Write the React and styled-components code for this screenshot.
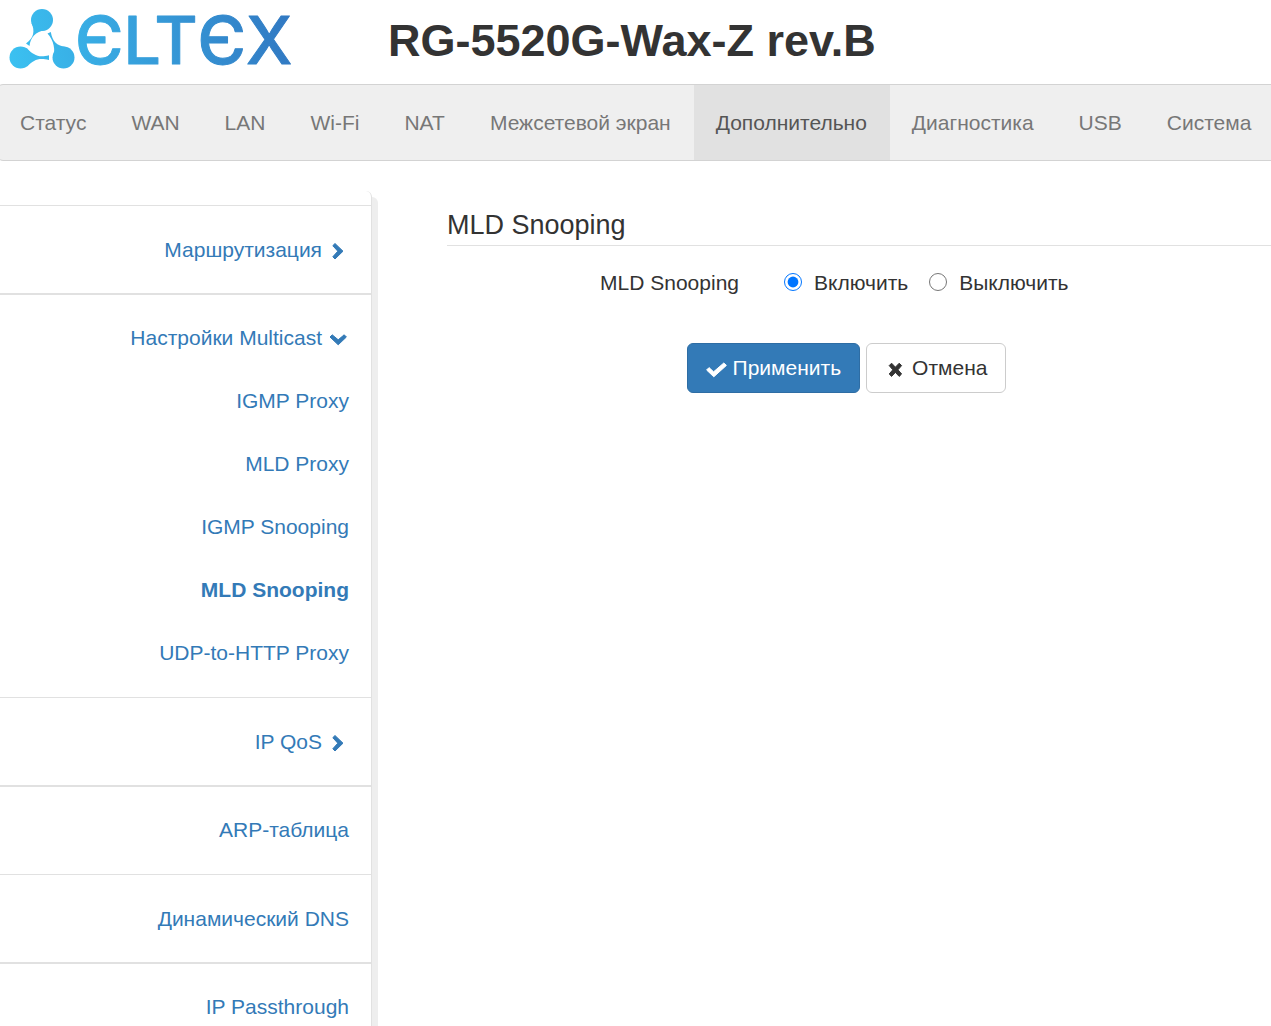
import React,{useState} from 'react';
import styled,{createGlobalStyle} from 'styled-components';

const secciones = ['Статус','WAN','LAN','Wi-Fi','NAT','Межсетевой экран','Дополнительно','Диагностика','USB','Система'];

const menu = [
    {titulo:'Маршрутизация',flecha:'derecha'},
    {titulo:'Настройки Multicast',flecha:'abajo',hijos:['IGMP Proxy','MLD Proxy','IGMP Snooping','MLD Snooping','UDP-to-HTTP Proxy']},
    {titulo:'IP QoS',flecha:'derecha'},
    {titulo:'ARP-таблица'},
    {titulo:'Динамический DNS'},
    {titulo:'IP Passthrough'}
];

const trazos = {
    derecha: 'M7 2.5 L15 10.2 L7 18 L4.8 15.8 L9.8 10.2 L4.8 4.7 Z',
    abajo: 'M4.2 5.8 L10.2 10.8 L16.2 5.8 L18.4 8 L10.2 15.8 L2 8 Z',
    aplicar: 'M0.6 10 L3 7.6 L7.6 11.8 L17.8 3 L20.4 5.4 L7.8 16.8 Z',
    cancelar: 'M4.2 5.6 L6.6 3.2 L10.4 7.2 L14.2 3.2 L16.6 5.6 L13 9.8 L16.6 14 L14.2 16.4 L10.4 12.4 L6.6 16.4 L4.2 14 L7.8 9.8 Z'
};

const Icono = ({nombre}) => (
    <Svg viewBox="0 0 21 21" aria-hidden="true">
        <path d={trazos[nombre]} />
    </Svg>
);

const Logo = () => (
    <LogoSvg viewBox="0 0 300 84" aria-label="ELTEX">
        <defs>
            <linearGradient id="degradado" gradientUnits="userSpaceOnUse" x1="9" y1="60" x2="292" y2="20">
                <stop offset="0" stopColor="#3bc1f1" />
                <stop offset="1" stopColor="#3178c2" />
            </linearGradient>
        </defs>
        <g fill="url(#degradado)">
            <circle cx="42" cy="20" r="11" />
            <path d="M31.5 23 C35 31 34 38 26 43.5 L29.5 46 C30.5 38 35 31.5 46 30 Z" />
            <circle cx="20.5" cy="57.5" r="11" />
            <path d="M26 48 C34 55 38 58 49 55.3 L49 60 C38 57.5 34 60 27 66.5 Z" />
            <circle cx="63.5" cy="57.5" r="11" />
            <path d="M47.5 33.5 L50.8 32 C52.5 41 56 46 67 47.2 L53.3 60 C55.5 49 54 41 47.5 33.5 Z" />
            <LogoTexto x="75" y="64">ЄLTЄX</LogoTexto>
        </g>
    </LogoSvg>
);

const App = () => {
    const [snooping,cambiarSnooping]=useState('on');

    return (
        <>
            <EstiloGlobal />
            <Cabecera>
                <Logo />
                <Modelo>RG-5520G-Wax-Z rev.B</Modelo>
            </Cabecera>
            <Navegacion>
                {secciones.map(seccion =>
                    <EnlaceNav key={seccion} href="#" $activo={seccion==='Дополнительно'}>{seccion}</EnlaceNav>
                )}
            </Navegacion>
            <Cuerpo>
                <Lateral>
                    {menu.map(({titulo,flecha,hijos}) =>
                        <Grupo key={titulo}>
                            <EnlaceMenu href="#">
                                {titulo}
                                {flecha && <Icono nombre={flecha} />}
                            </EnlaceMenu>
                            {hijos && hijos.map(hijo =>
                                <EnlaceMenu key={hijo} href="#" $activo={hijo==='MLD Snooping'}>{hijo}</EnlaceMenu>
                            )}
                        </Grupo>
                    )}
                </Lateral>
                <Contenido>
                    <Titulo>MLD Snooping</Titulo>
                    <form onSubmit={e=>e.preventDefault()}>
                        <Campo role="radiogroup" aria-labelledby="etiqueta">
                            <Etiqueta id="etiqueta">MLD Snooping</Etiqueta>
                            <Opciones>
                                <Opcion>
                                    <Radio name="mld" checked={snooping==='on'} onChange={()=>cambiarSnooping('on')} />
                                    Включить
                                </Opcion>
                                <Opcion>
                                    <Radio name="mld" checked={snooping==='off'} onChange={()=>cambiarSnooping('off')} />
                                    Выключить
                                </Opcion>
                            </Opciones>
                        </Campo>
                        <Botones>
                            <Boton type="submit" $primario><Icono nombre="aplicar" />Применить</Boton>
                            <Boton type="button" onClick={()=>cambiarSnooping('on')}><Icono nombre="cancelar" />Отмена</Boton>
                        </Botones>
                    </form>
                </Contenido>
            </Cuerpo>
        </>
    );
}

export default App;

const EstiloGlobal = createGlobalStyle`
	* {
		box-sizing: border-box;
	}

	body {
		margin: 0;
		background: #fff;
		color: #333;
		font-family: "Liberation Sans", Arial, sans-serif;
		font-size: 21px;
		line-height: 30px;
		overflow-x: hidden;
	}

	html {
		scrollbar-width: none;
	}
`;

const Cabecera = styled.header`
	display: flex;
	align-items: center;
	gap: 88px;
	height: 84px;
`;

const LogoSvg = styled.svg`
	flex: none;
	width: 300px;
	height: 84px;
`;

const LogoTexto = styled.text`
	font-family: Inter, sans-serif;
	font-size: 66px;
	font-weight: 500;
	stroke: url(#degradado);
	stroke-width: 1px;
	stroke-linejoin: round;
`;

const Modelo = styled.h1`
	margin: 0;
	padding-bottom: 2px;
	font-size: 45px;
	line-height: 50px;
`;

const Navegacion = styled.nav`
	display: flex;
	margin: 0 -6px 0 -3px;
	border: 1px solid #d3d3d3;
	border-radius: 6px;
	background: #efefef;
`;

const EnlaceNav = styled.a`
	padding: 23px 23px 22px 22px;
	color: ${({$activo}) => $activo ? '#555' : '#777'};
	background: ${({$activo}) => $activo ? '#e1e1e1' : 'transparent'};
	text-decoration: none;
	white-space: nowrap;
`;

const Cuerpo = styled.div`
	display: flex;
	padding-top: 30px;
`;

const Lateral = styled.aside`
	flex: none;
	width: 372px;
	padding-top: 14px;
	border-right: 1px solid #e1e1e1;
	border-radius: 0 6px 0 0;
	box-shadow: 6px 6px 0 #eee;
`;

const Grupo = styled.div`
	padding: 12px 0;
	border-top: 1px solid #e1e1e1;

	&:nth-child(even) {
		padding: 11px 0 13px;
		border-top-width: 2px;
	}
`;

const EnlaceMenu = styled.a`
	display: flex;
	align-items: center;
	justify-content: flex-end;
	gap: 6px;
	height: 63px;
	padding-right: 22px;
	color: #337ab7;
	font-weight: ${({$activo}) => $activo ? 'bold' : 'normal'};
	text-decoration: none;
`;

const Svg = styled.svg`
	flex: none;
	width: 21px;
	height: 21px;
	margin-top: 4px;
	overflow: visible;
	fill: currentColor;
	stroke: currentColor;
	stroke-width: 1px;
	stroke-linejoin: round;
`;

const Contenido = styled.main`
	flex: 1;
	padding: 16px 0 0 75px;
`;

const Titulo = styled.h2`
	margin: 0 0 22px;
	padding-top: 1px;
	padding-bottom: 2px;
	border-bottom: 1px solid #e1e1e1;
	font-size: 27px;
	font-weight: normal;
	line-height: 35px;
`;

const Campo = styled.div`
	display: grid;
	grid-template-columns: 292px 1fr;
	column-gap: 45px;
`;

const Etiqueta = styled.span`
	text-align: right;
`;

const Opciones = styled.div`
	display: flex;
	gap: 21px;
`;

const Opcion = styled.label`
	display: flex;
	align-items: center;
	gap: 12px;
`;

const Radio = styled.input.attrs({type:'radio'})`
	width: 18px;
	height: 18px;
	margin: 0 0 2px;
`;

const Botones = styled.div`
	display: flex;
	justify-content: center;
	gap: 6px;
	margin-top: 45px;
	padding-right: 25px;
`;

const Boton = styled.button`
	display: flex;
	align-items: center;
	gap: 6px;
	height: 50px;
	padding: 0 18px;
	border: 1px solid ${({$primario}) => $primario ? '#2e6da4' : '#ccc'};
	border-radius: 6px;
	color: ${({$primario}) => $primario ? '#fff' : '#333'};
	background: ${({$primario}) => $primario ? '#337ab7' : '#fff'};
	font: inherit;
	cursor: pointer;
`;
